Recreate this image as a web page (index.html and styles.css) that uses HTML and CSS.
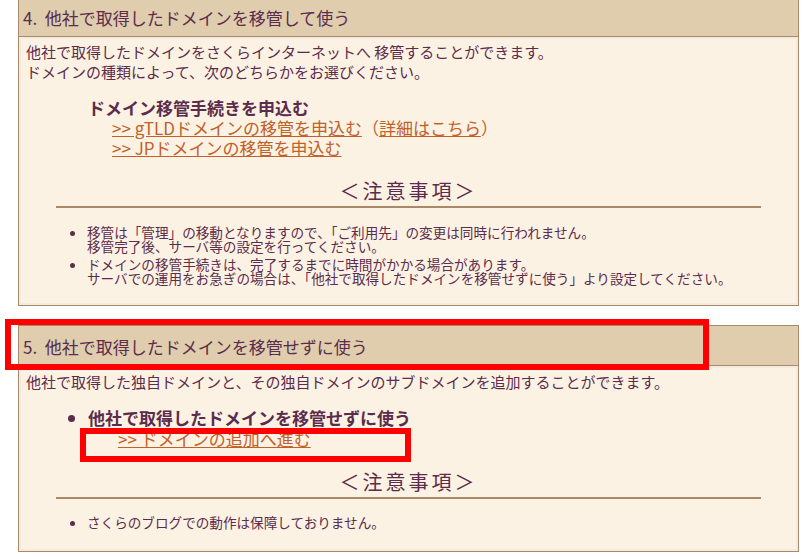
FILE: index.html
```html
<!DOCTYPE html>
<html>
<head>
  <meta charset="utf-8">
  <title>ドメイン設定</title>
  <link rel="stylesheet" href="styles.css">
</head>
<body>
  <div class="pagina">

    <div class="caja">
      <div class="caja-titulo">4.&nbsp; 他社で取得したドメインを移管して使う</div>
      <div class="caja-cuerpo">
        <p class="texto">他社で取得したドメインをさくらインターネットへ 移管することができます。<br>ドメインの種類によって、次のどちらかをお選びください。</p>

        <div class="tramite">
          <div class="tramite-titulo">ドメイン移管手続きを申込む</div>
          <div class="tramite-link"><a href="#">&gt;&gt; gTLDドメインの移管を申込む</a>（<a href="#">詳細はこちら</a>）</div>
          <div class="tramite-link"><a href="#">&gt;&gt; JPドメインの移管を申込む</a></div>
        </div>

        <div class="aviso">＜注意事項＞</div>
        <ul class="notas">
          <li>移管は「管理」の移動となりますので、「ご利用先」の変更は同時に行われません。<br>移管完了後、サーバ等の設定を行ってください。</li>
          <li>ドメインの移管手続きは、完了するまでに時間がかかる場合があります。<br>サーバでの運用をお急ぎの場合は、「他社で取得したドメインを移管せずに使う」より設定してください。</li>
        </ul>
      </div>
    </div>

    <div class="caja caja-dos">
      <div class="caja-titulo">5.&nbsp; 他社で取得したドメインを移管せずに使う</div>
      <div class="caja-cuerpo cuerpo-dos">
        <p class="texto">他社で取得した独自ドメインと、その独自ドメインのサブドメインを追加することができます。</p>

        <ul class="opciones">
          <li>
            <div class="tramite-titulo">他社で取得したドメインを移管せずに使う</div>
            <div class="opcion-link"><a href="#">&gt;&gt; ドメインの追加へ進む</a></div>
          </li>
        </ul>

        <div class="aviso aviso-dos">＜注意事項＞</div>
        <ul class="notas notas-dos">
          <li>さくらのブログでの動作は保障しておりません。</li>
        </ul>
      </div>
    </div>

    <!-- marcas rojas de la captura -->
    <div class="marca marca-titulo"></div>
    <div class="marca marca-link"></div>
  </div>
</body>
</html>
```

FILE: styles.css
```css
body {
  margin: 0;
  background-color: #ffffff;
  font-family: "Noto Sans CJK JP", "DejaVu Sans", sans-serif;
  color: #5b2c4b;
}

.pagina {
  position: relative;
  padding-left: 18px;
  width: 781px;
}

.caja {
  border: 1px solid #a88a6a;
  border-top: none;
  background-color: #fcf2e3;
}

.caja-dos {
  margin-top: 19px;
  border-top: 1px solid #a88a6a;
}

.caja-titulo {
  height: 36px;
  line-height: 35px;
  padding-left: 4px;
  background-color: #dfcdae;
  border-bottom: 1px solid #a88a6a;
  font-size: 17px;
}

.caja-dos .caja-titulo {
  height: 39px;
  line-height: 42px;
}

.caja-cuerpo {
  border: 2px solid #f3ebe0;
  padding-bottom: 14px;
}

.cuerpo-dos {
  padding-bottom: 16px;
}

.texto {
  margin: 3px 0 0 5px;
  font-size: 15px;
  line-height: 20px;
}

.cuerpo-dos .texto {
  margin-top: 4px;
}

.tramite {
  margin: 16px 0 0 67px;
}

.tramite-titulo {
  font-size: 17px;
  font-weight: bold;
  line-height: 20px;
}

.tramite-link {
  padding-left: 24px;
  font-size: 17px;
  line-height: 20px;
  color: #c0612b;
}

.tramite-link a,
.opcion-link a {
  color: #c0612b;
}

.aviso {
  margin: 21px 35px 0 35px;
  padding-bottom: 3px;
  border-bottom: 2px solid #a88a6a;
  text-align: center;
  font-size: 20px;
  line-height: 24px;
  letter-spacing: 3px;
}

.aviso-dos {
  margin-top: 20px;
}

.notas {
  margin: 17px 0 0 0;
  padding-left: 66px;
  font-size: 13.6px;
  line-height: 14px;
}

.notas li {
  margin-bottom: 4px;
}

.notas-dos {
  margin-top: 16px;
}

.opciones {
  margin: 16px 0 0 0;
  padding-left: 67px;
  font-size: 17px;
  line-height: 20px;
}

.opcion-link {
  padding-left: 30px;
  font-size: 17px;
  line-height: 22px;
}

/* recuadros rojos */
.marca {
  position: absolute;
  border: 6px solid #ff0000;
}

.marca-titulo {
  left: 5px;
  top: 319px;
  width: 692px;
  height: 39px;
}

.marca-link {
  left: 80px;
  top: 428px;
  width: 319px;
  height: 22px;
}
```
